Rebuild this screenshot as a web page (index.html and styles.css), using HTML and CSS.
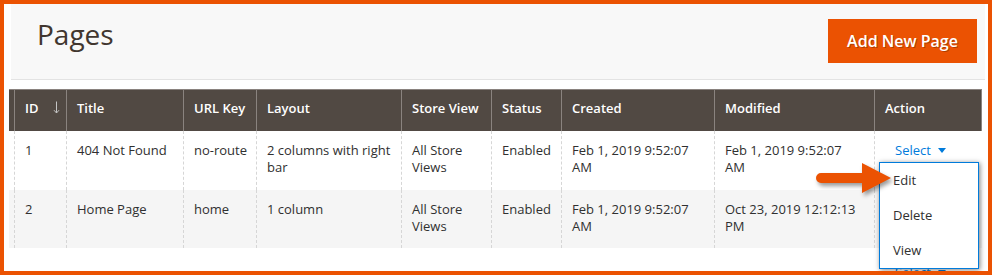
FILE: index.html
```html
<!DOCTYPE html>
<html lang="en">
<head>
<meta charset="utf-8">
<title>Pages</title>
<link rel="stylesheet" href="styles.css">
</head>
<body>
<div class="frame">
  <header class="page-header">
    <h1 class="page-title">Pages</h1>
    <button class="btn-primary" type="button">Add New Page</button>
  </header>

  <div class="grid">
    <div class="row head">
      <div class="cell spacer"></div>
      <div class="cell">ID <svg class="sort" width="7" height="13" viewBox="0 0 7 13"><path d="M3.5 0.5V12M1 9.2L3.5 12 6 9.2" fill="none" stroke="#c4c4c4" stroke-width="1"/></svg></div>
      <div class="cell">Title</div>
      <div class="cell">URL Key</div>
      <div class="cell">Layout</div>
      <div class="cell">Store View</div>
      <div class="cell">Status</div>
      <div class="cell">Created</div>
      <div class="cell">Modified</div>
      <div class="cell last">Action</div>
    </div>
    <div class="row body r1">
      <div class="cell spacer"></div>
      <div class="cell">1</div>
      <div class="cell">404 Not Found</div>
      <div class="cell">no-route</div>
      <div class="cell">2 columns with right bar</div>
      <div class="cell">All Store Views</div>
      <div class="cell">Enabled</div>
      <div class="cell date">Feb 1, 2019 9:52:07 AM</div>
      <div class="cell date">Feb 1, 2019 9:52:07 AM</div>
      <div class="cell action">
        <span class="select">Select<span class="caret"></span></span>
        <ul class="menu">
          <li>Edit</li>
          <li>Delete</li>
          <li>View</li>
        </ul>
      </div>
    </div>
    <div class="row body r2">
      <div class="cell spacer"></div>
      <div class="cell">2</div>
      <div class="cell">Home Page</div>
      <div class="cell">home</div>
      <div class="cell">1 column</div>
      <div class="cell">All Store Views</div>
      <div class="cell">Enabled</div>
      <div class="cell date">Feb 1, 2019 9:52:07 AM</div>
      <div class="cell date">Oct 23, 2019 12:12:13 PM</div>
      <div class="cell action"><span class="peek">Select<span class="caret"></span></span></div>
    </div>
  </div>

  <svg class="pointer" width="90" height="44" viewBox="0 0 90 44">
    <path d="M11 15H52V5L81 20L52 35V25H11A5 5 0 0 1 11 15Z" fill="#eb5202"/>
  </svg>
</div>
</body>
</html>
```

FILE: styles.css
```css
* { box-sizing: border-box; }

body {
  margin: 0;
  font-family: "Open Sans", "Liberation Sans", sans-serif;
  color: #303030;
  background: #fff;
}

.frame {
  position: relative;
  width: 992px;
  height: 275px;
  border: 4px solid #eb5202;
  overflow: hidden;
  background: #fff;
}

.page-header {
  display: flex;
  justify-content: space-between;
  align-items: flex-start;
  height: 76px;
  margin: 0 3px 0 7px;
  padding: 15px 8px 0 26px;
  background: #f8f8f8;
  border-bottom: 1px solid #e3e3e3;
}

.page-title {
  margin: 0;
  font-size: 28px;
  line-height: 30px;
  font-weight: 400;
  color: #41362f;
}

.btn-primary {
  height: 44px;
  width: 149px;
  padding: 0;
  border: 0;
  background: #eb5202;
  color: #fff;
  font-family: inherit;
  font-size: 16px;
  font-weight: 600;
  text-shadow: 1px 1px 0 rgba(0, 0, 0, 0.25);
  cursor: pointer;
}

.grid {
  width: 973px;
  margin: 9px 0 0 5px;
  font-size: 13px;
  line-height: 17px;
}

.row {
  display: grid;
  grid-template-columns: 5px 52px 117px 73px 145px 90px 70px 153px 160px 108px;
}

.head .cell {
  height: 42px;
  padding: 10px 2px 0 10px;
  background: #514943;
  color: #fff;
  font-weight: 600;
  border-top: 1px solid #8a837f;
  border-left: 1px solid #8a837f;
}

.head .cell.spacer { border-left: 0; padding: 0; }
.head .cell.last { border-right: 1px solid #8a837f; }

.sort {
  margin-left: 11px;
  vertical-align: -1px;
}

.body .cell {
  padding: 11px 2px 0 10px;
  border-left: 1px dashed #d6d6d6;
}

.body .cell.date { padding-right: 12px; }
.body .cell.spacer { border-left: 0; padding: 0; }

.r1 { height: 59px; background: #fff; }
.r2 { height: 58px; background: #f5f5f5; }

.action { position: relative; }

.select, .peek {
  color: #007bdb;
  padding-left: 10px;
}

.caret {
  display: inline-block;
  margin-left: 7px;
  vertical-align: 2px;
  border-left: 4px solid transparent;
  border-right: 4px solid transparent;
  border-top: 5px solid #007bdb;
}

.peek {
  position: absolute;
  left: 10px;
  top: 74px;
  z-index: 1;
}

.menu {
  position: absolute;
  left: 4px;
  top: 31px;
  z-index: 2;
  width: 100px;
  margin: 0;
  padding: 0;
  list-style: none;
  background: #fff;
  border: 1px solid #007bdb;
  box-shadow: 1px 1px 5px rgba(0, 0, 0, 0.5);
}

.menu li {
  height: 35px;
  line-height: 35px;
  padding-left: 13px;
  color: #303030;
}

.pointer {
  position: absolute;
  left: 806px;
  top: 154px;
  z-index: 3;
  filter: drop-shadow(2px 3px 2px rgba(0, 0, 0, 0.4));
}
```
